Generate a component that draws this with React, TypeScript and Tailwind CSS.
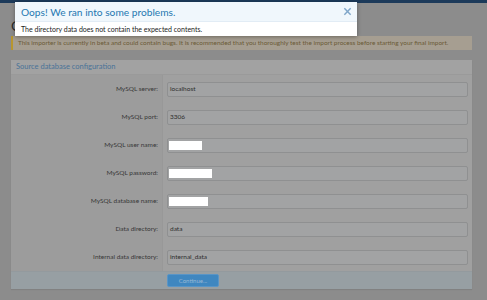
import React from "react";

const rows: { label: string; value?: string; white?: number }[] = [
  { label: "MySQL server:", value: "localhost" },
  { label: "MySQL port:", value: "3306" },
  { label: "MySQL user name:", white: 33 },
  { label: "MySQL password:", white: 43 },
  { label: "MySQL database name:", white: 39 },
  { label: "Data directory:", value: "data" },
  { label: "Internal data directory:", value: "internal_data" },
];

export default function App() {
  return (
    <div
      className="relative w-[487px] h-[300px] overflow-hidden bg-[#8c8c8c]"
      style={{ fontFamily: "Lato, 'Noto Sans', sans-serif" }}
    >
      <div className="h-[3px] bg-[#1c3a5a]" />
      <div className="pl-[11px] pr-[15px]">
        <h1 className="mt-[15px] h-[16px] text-[14px] leading-[16px] text-[#2a2a2a]">
          Configure importer
        </h1>
        <div className="mt-[2px] h-[14px] flex items-center border-l-2 border-[#b8962e] bg-[#a69e91] pl-[5px] text-[6.45px] text-[#6a5a36] whitespace-nowrap">
          This importer is currently in beta and could contain bugs. It is recommended that you thoroughly test the import process before starting your final import.
        </div>
        <div className="mt-[10px] bg-[#a0a0a0] shadow-[0_1px_1px_rgba(0,0,0,0.08)]">
          <div className="h-[15px] flex items-center pl-[5px] text-[7.5px] text-[#4a7398] bg-[#a2a2a2] border-b border-[#9a9a9a]">
            Source database configuration
          </div>
          <div className="flex">
            <div className="w-[152px] bg-[#9c9c9c] border-r border-[#989898]">
              {rows.map((r) => (
                <div key={r.label} className="h-[28px] flex items-center justify-end pr-[4px] text-[6.5px] text-[#383838]">
                  {r.label}
                </div>
              ))}
            </div>
            <div className="flex-1 pl-[4px] pr-[4px]">
              {rows.map((r) => (
                <div key={r.label} className="h-[28px] flex items-center">
                  <div className="h-[15px] w-full rounded-[2px] border border-[#8f9091] bg-[#a2a3a4] flex items-center pl-[1px] text-[6.5px] text-[#2e2e2e]">
                    {r.white ? (
                      <div className="h-[9px] bg-white" style={{ width: r.white }} />
                    ) : (
                      <span className="pl-[1px]">{r.value}</span>
                    )}
                  </div>
                </div>
              ))}
            </div>
          </div>
          <div className="h-[18px] flex items-center bg-[#979fa3] border-t border-[#939a9e] pl-[156px]">
            <div className="h-[13px] w-[52px] rounded-[2px] bg-[#3f87c0] border border-[#5a95c6] flex items-center justify-center text-[6px] text-[#9ab8d4]">
              Continue...
            </div>
          </div>
        </div>
      </div>

      <div className="absolute left-[15px] top-[2px] w-[342px] bg-white shadow-[0_1px_4px_rgba(0,0,0,0.35)]">
        <div className="h-[20px] flex items-center justify-between bg-[#f0f7fc] border-b border-[#e2ecf5] pl-[6px] pr-[5px]">
          <span className="text-[10.2px] leading-[14px] text-[#2577b1]">Oops! We ran into some problems.</span>
          <svg width="9" height="9" viewBox="0 0 10 10">
            <path d="M1.5 1.5 L8.5 8.5 M8.5 1.5 L1.5 8.5" stroke="#7fa6c9" strokeWidth="1.6" />
          </svg>
        </div>
        <div className="h-[14px] flex items-center pl-[6px] text-[7px] text-[#222]">
          The directory data does not contain the expected contents.
        </div>
      </div>
    </div>
  );
}
